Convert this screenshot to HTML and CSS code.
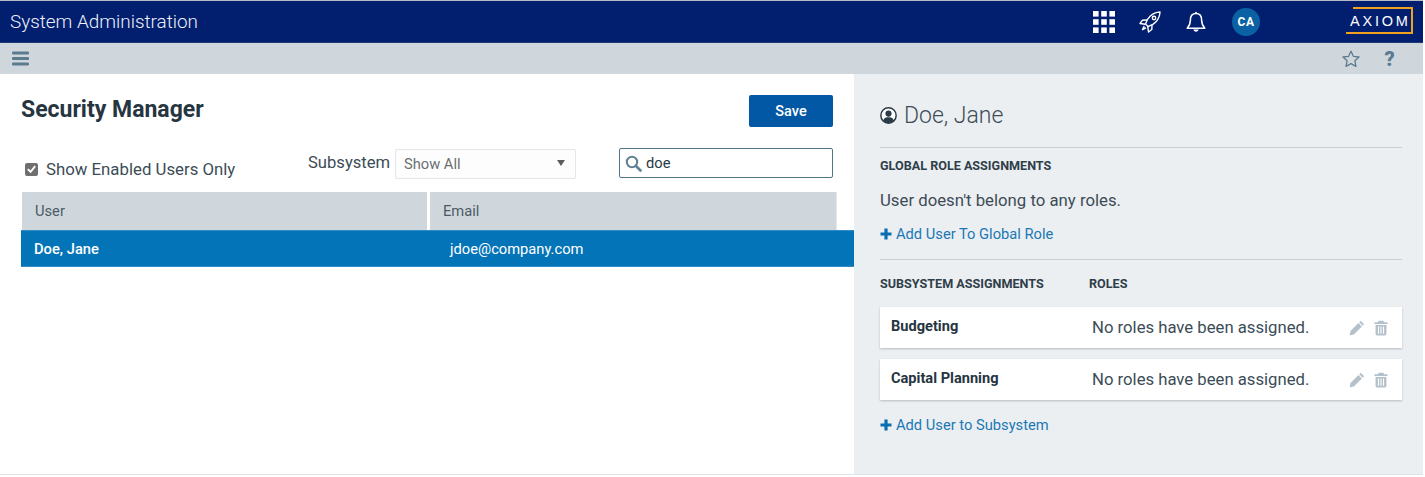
FILE: index.html
```html
<!DOCTYPE html>
<html lang="en">
<head>
<meta charset="utf-8">
<title>System Administration</title>
<link rel="stylesheet" href="styles.css">
</head>
<body>
<div class="app">
  <header class="topbar">
    <div class="app-title">System Administration</div>
    <div class="top-icons">
      <svg class="ic-grid" width="22" height="22" viewBox="0 0 22 22" fill="#fff"><rect x="0" y="0" width="5.6" height="5.6"/><rect x="8.2" y="0" width="5.6" height="5.6"/><rect x="16.4" y="0" width="5.6" height="5.6"/><rect x="0" y="8.2" width="5.6" height="5.6"/><rect x="8.2" y="8.2" width="5.6" height="5.6"/><rect x="16.4" y="8.2" width="5.6" height="5.6"/><rect x="0" y="16.4" width="5.6" height="5.6"/><rect x="8.2" y="16.4" width="5.6" height="5.6"/><rect x="16.4" y="16.4" width="5.6" height="5.6"/></svg>
      <svg class="ic-rocket" width="22" height="22" viewBox="0 0 22 22" fill="none" stroke="#fff" stroke-width="1.4" stroke-linejoin="round" stroke-linecap="round"><path d="M6.5 13 C8 7 13 1.5 21 1 C20.5 9 15 14 9 15.5 Z"/><circle cx="15" cy="7" r="1.7"/><path d="M8 9 L3.5 9.2 L1 12.5 L6 13.2"/><path d="M13 14 L12.8 18.5 L9.5 21 L8.8 15.8"/><path d="M5 15.5 L3.5 18.5 L6.5 17"/></svg>
      <svg class="ic-bell" width="20" height="22" viewBox="0 0 20 22" fill="none" stroke="#fff" stroke-width="1.5" stroke-linejoin="round"><path d="M10 2.6 C6 2.6 4.4 5.6 4.4 9 C4.4 13 3.2 15 1.2 17.2 L18.8 17.2 C16.8 15 15.6 13 15.6 9 C15.6 5.6 14 2.6 10 2.6 Z"/><circle cx="10" cy="1.6" r="0.9" fill="#fff" stroke="none"/><path d="M7.4 18.6 C7.6 21.4 12.4 21.4 12.6 18.6 Z" fill="#fff" stroke="none"/></svg>
      <div class="avatar">CA</div>
    </div>
    <div class="logo"><span class="logo-frame"></span><span class="logo-text">AXIOM</span></div>
  </header>
  <div class="toolbar">
    <svg class="ic-menu" width="17" height="15" viewBox="0 0 17 15" fill="#5b7b8f"><rect y="0.5" width="17" height="3" rx="1"/><rect y="6" width="17" height="3" rx="1"/><rect y="11.5" width="17" height="3" rx="1"/></svg>
    <div class="tool-right">
      <svg width="18" height="18" viewBox="0 0 18 18" fill="none" stroke="#5b7b8f" stroke-width="1.3" stroke-linejoin="round"><path d="M9 1.2 L11.4 6.3 L17 7 L12.9 10.8 L14 16.4 L9 13.6 L4 16.4 L5.1 10.8 L1 7 L6.6 6.3 Z"/></svg>
      <span class="help">?</span>
    </div>
  </div>
  <main class="content">
    <section class="left">
      <div class="title-row">
        <h1 class="page-title">Security Manager</h1>
        <button class="save" type="button">Save</button>
      </div>
      <div class="filter-row">
        <label class="enabled"><span class="check"><svg width="14" height="14" viewBox="0 0 14 14" fill="none" stroke="#fff" stroke-width="2"><path d="M3 7.2 L6 10 L11 4"/></svg></span>Show Enabled Users Only</label>
        <span class="sub-label">Subsystem</span>
        <div class="select"><span>Show All</span><i class="caret"></i></div>
        <div class="search">
          <svg width="17" height="17" viewBox="0 0 17 17" fill="none" stroke="#5f7f92" stroke-width="2"><circle cx="7" cy="7" r="5.2"/><path d="M11 11 L15.5 15.5" stroke-width="2.6" stroke-linecap="round"/></svg>
          <span>doe</span>
        </div>
      </div>
      <div class="grid-head">
        <div class="col-user">User</div>
        <div class="col-email">Email</div>
      </div>
      <div class="grid-row">
        <div class="cell-user">Doe, Jane</div>
        <div class="cell-email">jdoe@company.com</div>
      </div>
    </section>
    <aside class="right">
      <div class="user-head">
        <svg width="17" height="17" viewBox="0 0 16 16"><circle cx="8" cy="8" r="7.2" fill="#fff" stroke="#2a3b47" stroke-width="1.4"/><circle cx="8" cy="6.2" r="2.9" fill="#2a3b47"/><path d="M2.8 12.6 C4 10 6 9.6 8 9.6 C10 9.6 12 10 13.2 12.6 C10.5 15.8 5.5 15.8 2.8 12.6 Z" fill="#2a3b47"/></svg>
        <h2 class="user-name">Doe, Jane</h2>
      </div>
      <div class="section-top">
        <h3 class="sec-title">GLOBAL ROLE ASSIGNMENTS</h3>
        <p class="no-roles">User doesn't belong to any roles.</p>
        <a class="add-link" href="#"><svg width="12" height="12" viewBox="0 0 12 12" fill="#0a6fb0"><path d="M4.4 0.5 H7.6 V4.4 H11.5 V7.6 H7.6 V11.5 H4.4 V7.6 H0.5 V4.4 H4.4 Z"/></svg>Add User To Global Role</a>
      </div>
      <div class="section-sub">
        <div class="sub-head"><h3 class="sec-title sub-col">SUBSYSTEM ASSIGNMENTS</h3><h3 class="sec-title">ROLES</h3></div>
        <div class="card">
          <div class="card-name">Budgeting</div>
          <div class="card-roles">No roles have been assigned.</div>
          <div class="card-icons">
            <svg width="16" height="16" viewBox="0 0 15 15" fill="#b4c1ca"><path d="M11 0.8 L14.2 4 L12.8 5.4 L9.6 2.2 Z M8.9 2.9 L12.1 6.1 L4.6 13.6 L0.6 14.4 L1.4 10.4 Z"/></svg>
            <svg width="14" height="16" viewBox="0 0 13 15" fill="#b4c1ca"><path d="M4.4 0.6 H8.6 L9.6 2.2 H12.6 V3.8 H0.4 V2.2 H3.4 Z"/><path fill-rule="evenodd" d="M1.4 4.6 H11.6 V13 C11.6 14 11 14.6 10 14.6 H3 C2 14.6 1.4 14 1.4 13 Z M3.6 6.2 V13 H4.7 V6.2 Z M6 6.2 V13 H7 V6.2 Z M8.3 6.2 V13 H9.4 V6.2 Z"/></svg>
          </div>
        </div>
        <div class="card">
          <div class="card-name">Capital Planning</div>
          <div class="card-roles">No roles have been assigned.</div>
          <div class="card-icons">
            <svg width="16" height="16" viewBox="0 0 15 15" fill="#b4c1ca"><path d="M11 0.8 L14.2 4 L12.8 5.4 L9.6 2.2 Z M8.9 2.9 L12.1 6.1 L4.6 13.6 L0.6 14.4 L1.4 10.4 Z"/></svg>
            <svg width="14" height="16" viewBox="0 0 13 15" fill="#b4c1ca"><path d="M4.4 0.6 H8.6 L9.6 2.2 H12.6 V3.8 H0.4 V2.2 H3.4 Z"/><path fill-rule="evenodd" d="M1.4 4.6 H11.6 V13 C11.6 14 11 14.6 10 14.6 H3 C2 14.6 1.4 14 1.4 13 Z M3.6 6.2 V13 H4.7 V6.2 Z M6 6.2 V13 H7 V6.2 Z M8.3 6.2 V13 H9.4 V6.2 Z"/></svg>
          </div>
        </div>
        <a class="add-link add-sub" href="#"><svg width="12" height="12" viewBox="0 0 12 12" fill="#0a6fb0"><path d="M4.4 0.5 H7.6 V4.4 H11.5 V7.6 H7.6 V11.5 H4.4 V7.6 H0.5 V4.4 H4.4 Z"/></svg>Add User to Subsystem</a>
      </div>
    </aside>
  </main>
</div>
</body>
</html>
```

FILE: styles.css
```css
* { box-sizing: border-box; }
html, body { margin: 0; padding: 0; background: #fff; }
body { font-family: Roboto, "Liberation Sans", sans-serif; color: #2a3b47; overflow: hidden; }
h1, h2, h3, p { margin: 0; }
.app {
  width: 1423px;
  height: 475px;
  display: flex;
  flex-direction: column;
  border-top: 1px solid #b9bcc6;
  border-bottom: 1px solid #dfe2e6;
}
.topbar {
  height: 42px;
  background: #011e6f;
  border-bottom: 1px solid #1b3a77;
  display: flex;
  align-items: center;
  padding-left: 10px;
  flex: none;
}
.app-title { color: #eef2f8; font-size: 18.9px; font-weight: 300; width: 1083px; }
.top-icons { display: flex; align-items: center; width: 252px; margin-top: 1px; }
.ic-grid { margin-right: 24px; }
.ic-rocket { margin-right: 25px; }
.ic-bell { margin-right: 26px; }
.avatar {
  width: 28px; height: 28px; border-radius: 50%;
  background: #0a62a5; color: #fff;
  font-size: 12px; font-weight: 700; letter-spacing: .5px;
  display: flex; align-items: center; justify-content: center;
}
.logo { position: relative; width: 67px; height: 27px; margin: 0 0 3px 1px; }
.logo-frame {
  position: absolute; left: 7px; top: 0; right: 0; bottom: 0;
  border: 2px solid #f0a11f; border-left: 0;
}
.logo-frame::before { content: ""; position: absolute; left: -7px; bottom: -2px; width: 7px; height: 2px; background: #f0a11f; }
.logo-text {
  position: absolute; left: 4px; top: 5px;
  color: #fff; font-size: 14.5px; font-weight: 400; letter-spacing: 2.8px; line-height: 18px;
  font-family: "Liberation Sans", sans-serif;
}
.toolbar {
  height: 31px; background: #d0d7dc;
  display: flex; align-items: center; justify-content: space-between;
  padding: 0 28px 0 12px; flex: none;
}
.tool-right { display: flex; align-items: center; gap: 24px; }
.help { color: #5b7b8f; font-size: 20px; font-weight: 900; width: 11px; text-align: center; line-height: 18px; }
.content { flex: 1; display: flex; min-height: 0; }
.left { width: 854px; padding: 21px 0 0 21px; background: #fff; flex: none; }
.title-row { display: flex; justify-content: space-between; align-items: flex-start; padding-right: 21px; height: 53px; }
.page-title { font-size: 23px; font-weight: 700; line-height: 28px; color: #26353f; margin-top: 1px; }
.save {
  width: 84px; height: 32px; background: #0258a5; color: #fff;
  border: 0; border-radius: 2px; font: 500 14.5px Roboto, sans-serif;
}
.filter-row { display: flex; align-items: flex-start; height: 44px; padding-right: 21px; }
.enabled {
  display: flex; align-items: center; font-size: 16.8px; color: #3c4c57; width: 287px;
  padding-left: 4px; height: 24px; margin-top: 9px;
}
.check {
  width: 13px; height: 13px; background: #6f6f6f; border-radius: 2px; margin-right: 8px;
  display: flex; align-items: center; justify-content: center;
}
.sub-label { font-size: 16.6px; color: #3c4c57; line-height: 22px; width: 87px; margin-top: 4px; }
.select {
  width: 181px; height: 30px; border: 1px solid #e4e7ea; border-radius: 2px; background: #fdfdfd;
  display: flex; align-items: center; justify-content: space-between;
  padding: 0 10px 0 8px; font-size: 14.7px; color: #6a6f73; margin-top: 1px;
}
.caret { width: 0; height: 0; border-left: 4.5px solid transparent; border-right: 4.5px solid transparent; border-top: 6px solid #5c5c5c; margin-bottom: 2px; }
.search {
  width: 214px; height: 30px; margin-left: 43px; border: 1.5px solid #51738a; border-radius: 2px; background: #fff;
  display: flex; align-items: center; gap: 4px; padding-left: 5px; font-size: 14.7px; color: #2a3b47;
}
.grid-head { display: flex; height: 38px; margin-left: 1px; gap: 3px; width: 815px; font-size: 14.7px; color: #4b5b66; border-right: 1px solid #e6e9ec; }
.col-user, .col-email { background: #d0d7dc; display: flex; align-items: center; padding-left: 13px; }
.col-user { width: 405px; }
.col-email { flex: 1; }
.grid-row { display: flex; align-items: center; height: 37px; background: #0474b8; color: #fff; font-size: 14.7px; border-top: 1px solid #2f8dc6; border-bottom: 1px solid #2f8dc6; }
.cell-user { width: 429px; padding-left: 13px; font-weight: 500; }
.right { flex: 1; background: #eceff2; padding: 0 21px 0 26px; }
.user-head { display: flex; align-items: center; height: 73px; gap: 7px; padding-top: 10px; }
.user-name { font-size: 23px; font-weight: 300; color: #3d4c57; line-height: 30px; }
.section-top { border-top: 1px solid #c9ced4; height: 112px; padding-top: 11px; }
.sec-title { font-size: 12.6px; font-weight: 700; line-height: 14px; color: #2f3e49; }
.no-roles { font-size: 16.75px; line-height: 22px; margin-top: 16px; color: #3c4c57; }
.add-link { display: flex; align-items: center; gap: 4px; margin-top: 14px; color: #1a78b4; font-size: 14.7px; line-height: 18px; text-decoration: none; }
.section-sub { border-top: 1px solid #c9ced4; padding-top: 17px; }
.sub-head { display: flex; margin-bottom: 16px; }
.sub-col { width: 209px; }
.card {
  display: flex; align-items: center; height: 41px; background: #fff; margin-bottom: 11px;
  box-shadow: 0 1px 2px rgba(60, 70, 80, .3); padding: 0 14px 0 11px;
}
.card-name { width: 201px; font-size: 14.6px; font-weight: 700; color: #26353f; margin-top: -3px; }
.card-roles { flex: 1; font-size: 16.7px; color: #3c4c57; }
.card-icons { display: flex; align-items: center; gap: 9px; }
.add-sub { margin-top: 16px; }
```
